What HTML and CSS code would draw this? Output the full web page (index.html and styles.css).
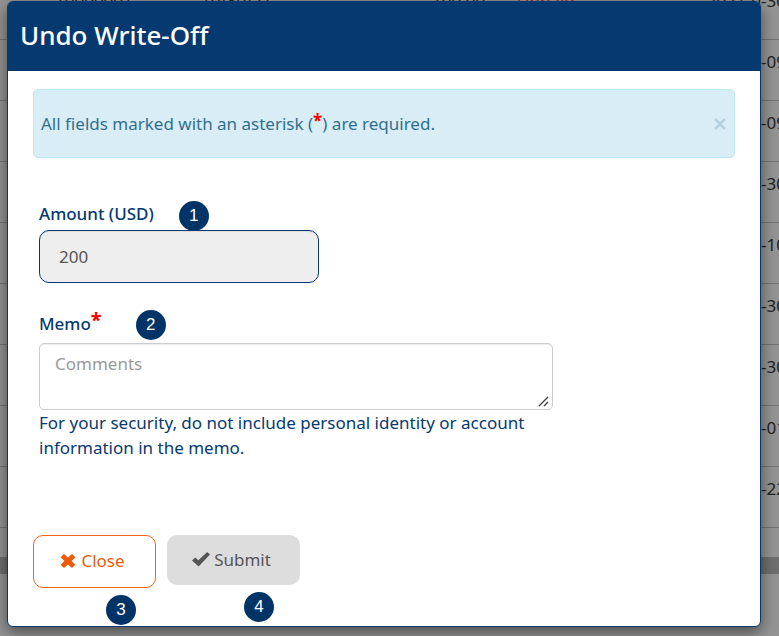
FILE: index.html
```
<!doctype html>
<html lang="en">
    <head>
        <meta charset="UTF-8" />
        <meta name="viewport" content="width=device-width, initial-scale=1.0" />
        <title>Undo Write-Off</title>
        <link rel="stylesheet" href="styles.css">
    </head>
    <body>
        <!-- Transactions list behind the dialog -->
        <div class="page" aria-hidden="true">
            <table class="transactions">
                <colgroup>
                    <col class="col-id" />
                    <col class="col-date" />
                    <col class="col-amount" />
                    <col class="col-status" />
                    <col />
                    <col class="col-day" />
                </colgroup>
                <tbody>
                    <tr><td>10000001</td><td>10/30/21</td><td>100.00</td><td class="red">Unpaid</td><td class="month">2021-0</td><td class="day">-30</td></tr>
                    <tr><td colspan="5"></td><td class="day">-09</td></tr>
                    <tr><td colspan="5"></td><td class="day">-09</td></tr>
                    <tr><td colspan="5"></td><td class="day">-30</td></tr>
                    <tr><td colspan="5"></td><td class="day">-10</td></tr>
                    <tr><td colspan="5"></td><td class="day">-30</td></tr>
                    <tr><td colspan="5"></td><td class="day">-30</td></tr>
                    <tr><td colspan="5"></td><td class="day">-01</td></tr>
                    <tr><td colspan="5"></td><td class="day">-22</td></tr>
                </tbody>
            </table>
            <div class="scrollbar"></div>
        </div>

        <div class="backdrop">
            <div class="modal" role="dialog" aria-labelledby="modal-title">
                <div class="modal-header">
                    <h1 id="modal-title">Undo Write-Off</h1>
                </div>
                <form class="modal-body" id="undo-form">
                    <div class="alert">
                        <p>All fields marked with an asterisk (<span class="required">*</span>) are required.</p>
                        <button type="button" class="dismiss" aria-label="Dismiss">
                            <svg width="12" height="12" viewBox="0 0 12 12">
                                <path d="M1 1L11 11M11 1L1 11" stroke="currentColor" stroke-width="2.6" />
                            </svg>
                        </button>
                    </div>

                    <div class="field">
                        <div class="label-row">
                            <label for="amount">Amount (USD)</label>
                            <span class="step">1</span>
                        </div>
                        <input type="text" id="amount" name="amount" value="200" readonly />
                    </div>

                    <div class="field">
                        <div class="label-row memo-row">
                            <label for="memo">Memo<span class="required">*</span></label>
                            <span class="step">2</span>
                        </div>
                        <textarea id="memo" name="memo" placeholder="Comments" required></textarea>
                        <p class="help">For your security, do not include personal identity or account information in the memo.</p>
                    </div>

                    <div class="actions">
                        <div class="action">
                            <button type="button" class="btn btn-close">
                                <svg width="16" height="16" viewBox="0 0 16 16">
                                    <path d="M4 1L8 4.6L12 1L15.4 4.2L11.6 8L15.4 11.8L12 15L8 11.4L4 15L0.6 11.8L4.4 8L0.6 4.2Z" fill="currentColor" />
                                </svg>
                                Close
                            </button>
                            <span class="step">3</span>
                        </div>
                        <div class="action">
                            <button type="submit" class="btn btn-submit">
                                <svg width="18" height="16" viewBox="0 0 18 16">
                                    <path d="M0 9.6L3.2 6.6L6.4 9.2L15.2 1L18 3.6L6.6 15.4Z" fill="currentColor" />
                                </svg>
                                Submit
                            </button>
                            <span class="step">4</span>
                        </div>
                    </div>
                </form>
            </div>
        </div>
    </body>
</html>
```
FILE: styles.css
```
* {
    box-sizing: border-box;
}
body {
    margin: 0;
    min-height: 100vh;
    overflow: hidden;
    font-family: "Trebuchet MS", "Noto Sans", sans-serif;
    font-size: 17px;
    line-height: 25px;
    color: #063970;
    background-color: #949494;
}
p,
h1 {
    margin: 0;
}

/* Page behind the dialog */
.page {
    position: absolute;
    inset: 0;
    overflow: hidden;
}
.transactions {
    width: 100%;
    margin-top: -22px;
    table-layout: fixed;
    border-collapse: collapse;
    color: #222;
}
.transactions td {
    height: 61px;
    padding: 0 0 16px;
    border-bottom: 1px solid #747474;
    white-space: nowrap;
}
.transactions td:first-child {
    padding-left: 55px;
}
.col-id {
    width: 201px;
}
.col-date {
    width: 231px;
}
.col-amount {
    width: 85px;
}
.col-status {
    width: 100px;
}
.col-day {
    width: 18px;
}
.transactions .month {
    text-align: right;
}
.transactions .red {
    color: #a02020;
}
.scrollbar {
    height: 17px;
    margin-top: 29px;
    background-color: #6f6f6f;
}

/* Dialog */
.backdrop {
    position: relative;
    padding: 1px 18px 9px 7px;
}
.modal {
    background-color: #fff;
    border: 1px solid #063970;
    border-radius: 6px;
    box-shadow: 0 5px 15px rgba(0, 0, 0, 0.5);
}
.modal-header {
    padding: 14px 12px 16px;
    background-color: #063970;
    border-radius: 4px 4px 0 0;
}
h1 {
    font-size: 26px;
    font-weight: 500;
    line-height: 39px;
    color: #fff;
}
.modal-body {
    padding: 18px 25px 1px;
}
.alert {
    display: flex;
    align-items: center;
    justify-content: space-between;
    padding: 21px 8px 21px 7px;
    margin-bottom: 43px;
    color: #31708f;
    background-color: #d9edf7;
    border: 1px solid #bce8f1;
    border-radius: 5px;
}
.required {
    color: #f00;
    font-weight: bold;
    line-height: 1;
    vertical-align: 3px;
}
label .required {
    font-size: 20px;
}
.dismiss {
    display: flex;
    padding: 0;
    border: none;
    background: none;
    color: #b3d1e0;
    cursor: pointer;
}
.field {
    padding: 0 6px;
    margin-bottom: 27px;
}
.label-row {
    display: flex;
    align-items: flex-start;
    gap: 25px;
    height: 29px;
}
.memo-row {
    gap: 34px;
    height: 33px;
}
label {
    font-weight: 500;
}
.step {
    width: 30px;
    height: 30px;
    border-radius: 50%;
    background-color: #003366;
    color: #fff;
    font-family: "Liberation Sans", Arial, sans-serif;
    font-size: 17px;
    line-height: 30px;
    text-align: center;
}
input[type="text"] {
    display: block;
    width: 280px;
    height: 53px;
    padding: 0 19px;
    border: 1px solid #063970;
    border-radius: 10px;
    background-color: #eee;
    box-shadow: inset 0 1px 1px rgba(0, 0, 0, 0.075);
    color: #555;
    font: inherit;
}
textarea {
    display: block;
    width: 514px;
    max-width: 100%;
    height: 67px;
    padding: 7px 15px;
    border: 1px solid #ccc;
    border-radius: 5px;
    box-shadow: inset 0 1px 1px rgba(0, 0, 0, 0.075);
    font: inherit;
    resize: both;
}
textarea::placeholder {
    color: #999;
}
textarea::-webkit-resizer {
    background: url("data:image/svg+xml,%3Csvg xmlns='http://www.w3.org/2000/svg' width='15' height='15'%3E%3Cpath d='M2 12L11 3M7 12L11 8' stroke='%23444' stroke-width='1.4'/%3E%3C/svg%3E") no-repeat;
}
.help {
    max-width: 514px;
}
.actions {
    display: flex;
    align-items: flex-start;
    gap: 11px;
    margin-top: 75px;
}
.action {
    display: flex;
    flex-direction: column;
    align-items: flex-end;
    gap: 7px;
}
.action .step {
    margin-right: 20px;
}
.action:last-child .step {
    margin-right: 26px;
}
.btn {
    display: flex;
    align-items: center;
    justify-content: center;
    gap: 5px;
    padding: 0 10px 2px 6px;
    border-radius: 10px;
    font: inherit;
    cursor: pointer;
}
.btn-close {
    width: 123px;
    height: 53px;
    border: 1px solid #f26419;
    background-color: #fff;
    color: #ea5b0c;
}
.btn-submit {
    width: 133px;
    height: 50px;
    gap: 4px;
    border: none;
    background-color: #ddd;
    color: #555;
}
```
